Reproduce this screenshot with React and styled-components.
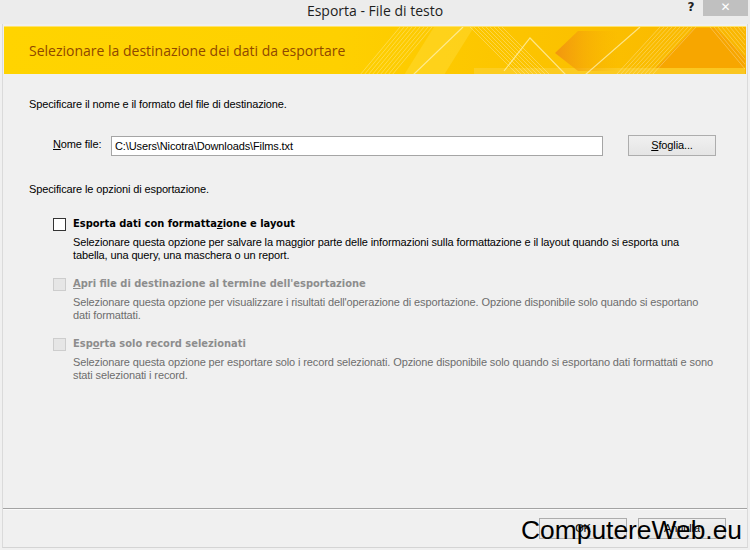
import styled, { createGlobalStyle } from 'styled-components'

const GlobalStyle = createGlobalStyle`
    html, body {
        margin: 0;
        padding: 0;
        background: #f0f0f0;
    }
    body {
        font-family: "Liberation Sans", Arial, sans-serif;
        font-size: 11px;
        letter-spacing: -0.12px;
        color: #000;
    }
`

const Window = styled.div`
    position: relative;
    width: 750px;
    height: 550px;
    display: flex;
    flex-direction: column;
    background: #f0f0f0;
    overflow: hidden;
`
const TitleBar = styled.div`
    height: 24px;
    display: flex;
    align-items: flex-start;
    justify-content: center;
    position: relative;
    background: #ececec;
`
const Title = styled.div`
    font-family: "Open Sans", "Noto Sans", sans-serif;
    font-size: 14px;
    letter-spacing: 0;
    line-height: 22px;
    color: #1e1e1e;
`
const Controls = styled.div`
    position: absolute;
    top: 0;
    right: 2px;
    display: flex;
    align-items: flex-start;
`
const HelpButton = styled.div`
    width: 24px;
    height: 16px;
    font-family: "DejaVu Sans", sans-serif;
    font-weight: bold;
    font-size: 12px;
    line-height: 14px;
    text-align: center;
    color: #222;
`
const CloseButton = styled.div`
    width: 45px;
    height: 16px;
    background: #c0c0c0;
    color: #fff;
    font-family: "DejaVu Sans", sans-serif;
    font-size: 12px;
    line-height: 15px;
    text-align: center;
`
const Frame = styled.div`
    flex: 1;
    margin: 0 2px 2px 2px;
    border-left: 1px solid #dadada;
    border-right: 1px solid #dadada;
    border-bottom: 1px solid #d4d4d4;
    display: flex;
    flex-direction: column;
`
const Banner = styled.div`
    position: relative;
    height: 48px;
    margin: 2px 1px 0 1px;
    display: flex;
    align-items: center;
    padding-left: 25px;
    background: linear-gradient(to right, #ffd400 0%, #fed000 45%, #fcc400 70%, #f9b600 100%);
    border-top: 1px solid #ffe36a;
    box-sizing: border-box;
    overflow: hidden;
`
const BannerArt = styled.svg`
    position: absolute;
    left: 0;
    top: 0;
    width: 741px;
    height: 48px;
`
const BannerText = styled.div`
    position: relative;
    font-family: "Open Sans", "Noto Sans", sans-serif;
    font-size: 14px;
    letter-spacing: 0;
    color: #8f4800;
`
const Body = styled.div`
    flex: 1;
    padding: 24px 0 0 26px;
`
const Intro = styled.div`
    line-height: 13px;
    margin-top: ${p => p.$top || 0}px;
`
const FileRow = styled.div`
    display: flex;
    align-items: center;
    margin: 24px 0 0 24px;
`
const FieldLabel = styled.label`
    width: 58px;
    line-height: 13px;
    margin-top: -3px;
`
const Input = styled.div`
    width: 492px;
    height: 20px;
    box-sizing: border-box;
    border: 1px solid #a5a5a5;
    background: #fff;
    padding: 0 3px;
    line-height: 18px;
`
const Button = styled.div`
    width: 88px;
    height: 21px;
    box-sizing: border-box;
    border: 1px solid #adadad;
    background: linear-gradient(#f0f0f0, #e5e5e5);
    text-align: center;
    line-height: 19px;
    margin-left: ${p => p.$left || 0}px;
`
const Options = styled.div`
    margin: 21px 0 0 24px;
    display: flex;
    flex-direction: column;
    gap: 15px;
`
const Option = styled.div`
    display: grid;
    grid-template-columns: 13px 1fr;
    column-gap: 7px;
    min-height: 45px;
    color: ${p => (p.$disabled ? '#6d6d6d' : '#000')};
`
const Check = styled.div`
    width: 13px;
    height: 13px;
    box-sizing: border-box;
    margin-top: 1px;
    border: 1px solid ${p => (p.$disabled ? '#cdcdcd' : '#333')};
    background: ${p => (p.$disabled ? '#e6e6e6' : '#fff')};
`
const OptionTitle = styled.div`
    font-family: "DejaVu Sans Condensed", "DejaVu Sans", sans-serif;
    font-weight: bold;
    font-size: 11px;
    line-height: 14px;
    letter-spacing: 0;
    color: ${p => (p.$disabled ? '#8d8d8d' : '#000')};
`
const OptionDesc = styled.div`
    grid-column: 2;
    margin-top: 5px;
    line-height: 13px;
`
const Footer = styled.div`
    height: 39px;
    border-top: 1px solid #a3a3a3;
    box-shadow: inset 0 1px 0 #fafafa;
    display: flex;
    justify-content: flex-end;
    align-items: flex-start;
    padding: 9px 21px 0 0;
    box-sizing: border-box;
`
const Watermark = styled.div`
    position: absolute;
    left: 521px;
    top: 517px;
    font-family: "Liberation Sans", Arial, sans-serif;
    font-size: 26.4px;
    letter-spacing: 0;
    line-height: 27px;
    color: #000;
    white-space: nowrap;
`

const options = [
    {
        title: <>Esporta dati con formatta<u>z</u>ione e layout</>,
        lines: [
            'Selezionare questa opzione per salvare la maggior parte delle informazioni sulla formattazione e il layout quando si esporta una',
            'tabella, una query, una maschera o un report.',
        ],
    },
    {
        title: <><u>A</u>pri file di destinazione al termine dell'esportazione</>,
        lines: [
            "Selezionare questa opzione per visualizzare i risultati dell'operazione di esportazione. Opzione disponibile solo quando si esportano",
            'dati formattati.',
        ],
        disabled: true,
    },
    {
        title: <>Esp<u>o</u>rta solo record selezionati</>,
        lines: [
            'Selezionare questa opzione per esportare solo i record selezionati. Opzione disponibile solo quando si esportano dati formattati e sono',
            'stati selezionati i record.',
        ],
        disabled: true,
    },
]

const hatch = (x0, count, dx, up) =>
    Array.from({ length: count }, (_, i) => {
        const x = x0 + i * 4
        return up
            ? <line key={i} x1={x} y1="48" x2={x + dx} y2="0" />
            : <line key={i} x1={x} y1="0" x2={x + dx} y2="48" />
    })

const Art = () => (
    <BannerArt viewBox="0 0 741 48" preserveAspectRatio="none">
        <defs>
            <linearGradient id="arrow" x1="0" x2="1">
                <stop offset="0" stopColor="#f29510" />
                <stop offset="1" stopColor="#f7b000" stopOpacity="0" />
            </linearGradient>
        </defs>
        <polygon points="400,48 430,0 470,0 440,48" fill="#ffe14a" opacity="0.35" />
        <rect x="470" y="41" width="271" height="7" fill="#fcd43c" opacity="0.55" />
        <polygon points="551,26 574,4 615,4 615,44 574,44" fill="url(#arrow)" />
        <polygon points="652,41 690,1 712,1 741,30 741,41" fill="#f7a600" />
        <g stroke="#fff" strokeWidth="0.8" opacity="0.35">
            {hatch(356, 9, 40, true)}
            {hatch(466, 9, 48, false)}
            {hatch(612, 10, 44, true)}
            {hatch(706, 9, 40, false)}
        </g>
        <g stroke="#fff6c0" strokeWidth="1.2" opacity="0.7" fill="none">
            <line x1="409" y1="48" x2="459" y2="0" />
            <polyline points="500,44 526,11 562,48" />
            <line x1="581" y1="48" x2="636" y2="0" />
        </g>
    </BannerArt>
)

const App = () => {
    return (
        <Window>
            <GlobalStyle />
            <TitleBar>
                <Title>Esporta - File di testo</Title>
                <Controls>
                    <HelpButton>?</HelpButton>
                    <CloseButton>✕</CloseButton>
                </Controls>
            </TitleBar>
            <Frame>
                <Banner>
                    <Art />
                    <BannerText>Selezionare la destinazione dei dati da esportare</BannerText>
                </Banner>
                <Body>
                    <Intro>Specificare il nome e il formato del file di destinazione.</Intro>
                    <FileRow>
                        <FieldLabel><u>N</u>ome file:</FieldLabel>
                        <Input>C:\Users\Nicotra\Downloads\Films.txt</Input>
                        <Button $left={25}><u>S</u>foglia...</Button>
                    </FileRow>
                    <Intro $top={27}>Specificare le opzioni di esportazione.</Intro>
                    <Options>
                        {options.map((o, i) => (
                            <Option key={i} $disabled={o.disabled}>
                                <Check $disabled={o.disabled} />
                                <OptionTitle $disabled={o.disabled}>{o.title}</OptionTitle>
                                <OptionDesc>
                                    {o.lines.map((l, j) => <div key={j}>{l}</div>)}
                                </OptionDesc>
                            </Option>
                        ))}
                    </Options>
                </Body>
                <Footer>
                    <Button>OK</Button>
                    <Button $left={11}>Annulla</Button>
                </Footer>
            </Frame>
            <Watermark>ComputereWeb.eu</Watermark>
        </Window>
    )
}

export default App
